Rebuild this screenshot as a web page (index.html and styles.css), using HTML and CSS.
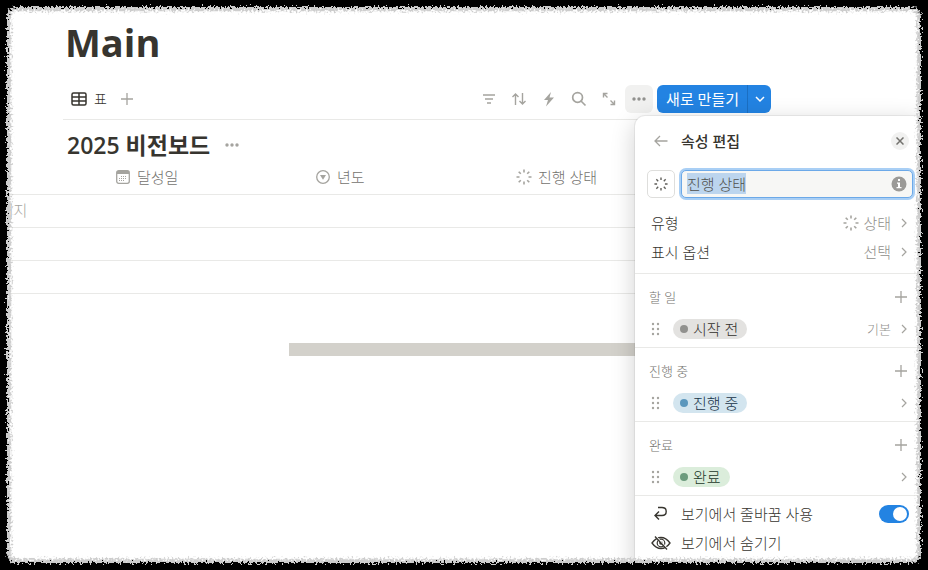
FILE: index.html
```html
<!DOCTYPE html>
<html lang="ko">
<head>
    <meta charset="UTF-8">
    <meta name="viewport" content="width=device-width, initial-scale=1.0">
    <title>Main</title>
    <link rel="stylesheet" href="styles.css">
</head>
<body>
    <svg class="defs" aria-hidden="true">
        <symbol id="spinner" viewBox="0 0 16 16">
            <path d="M8 .5v3M8 12.500v3M.5 8h3M12.500 8h3M2.700 2.700l2.100 2.100M11.200 11.200l2.100 2.100M2.700 13.300l2.100-2.100M11.200 4.800l2.100-2.100" fill="none" stroke="currentColor" stroke-width="1.600"/>
        </symbol>
        <symbol id="chevron" viewBox="0 0 8 12">
            <path d="M2 2l4 4-4 4" fill="none" stroke="currentColor" stroke-width="1.200"/>
        </symbol>
        <symbol id="plus" viewBox="0 0 14 14">
            <path d="M7 1v12M1 7h12" fill="none" stroke="currentColor" stroke-width="1.300"/>
        </symbol>
        <symbol id="dots" viewBox="0 0 16 16">
            <g fill="currentColor"><circle cx="3" cy="8" r="1.700"/><circle cx="8" cy="8" r="1.700"/><circle cx="13" cy="8" r="1.700"/></g>
        </symbol>
        <symbol id="grip" viewBox="0 0 10 14">
            <g fill="currentColor"><circle cx="2" cy="2" r="1.200"/><circle cx="7" cy="2" r="1.200"/><circle cx="2" cy="7" r="1.200"/><circle cx="7" cy="7" r="1.200"/><circle cx="2" cy="12" r="1.200"/><circle cx="7" cy="12" r="1.200"/></g>
        </symbol>
        <filter id="rough" x="0" y="0" width="100%" height="100%" color-interpolation-filters="sRGB">
            <feTurbulence type="fractalNoise" baseFrequency="0.5" numOctaves="3" seed="4" result="noise"/>
            <feDisplacementMap in="SourceGraphic" in2="noise" scale="10" xChannelSelector="R" yChannelSelector="G"/>
            <feGaussianBlur stdDeviation="0.4"/>
        </filter>
    </svg>

    <div class="page">
        <main>
            <div class="content">
                <h1>Main</h1>
                <div class="toolbar">
                    <button class="view-tab">
                        <svg width="16" height="14" viewBox="0 0 16 14"><path d="M2.500 1h11Q15 1 15 2.500v9q0 1.500-1.500 1.500h-11Q1 13 1 11.500v-9Q1 1 2.500 1zM1 5h14M1 9h14M8 1v12" fill="none" stroke="currentColor" stroke-width="1.500"/></svg>
                        표
                    </button>
                    <button class="icon-btn" aria-label="보기 추가"><svg width="14" height="14"><use href="#plus"/></svg></button>
                    <div class="tools">
                        <button class="icon-btn" aria-label="필터"><svg width="14" height="14" viewBox="0 0 14 14"><path d="M1 3h12M3 7h8M5 11h4" fill="none" stroke="currentColor" stroke-width="1.500"/></svg></button>
                        <button class="icon-btn" aria-label="정렬"><svg width="16" height="14" viewBox="0 0 16 14"><path d="M4.500 13V2M1.500 5l3-3 3 3M11.500 1v11M8.500 9l3 3 3-3" fill="none" stroke="currentColor" stroke-width="1.400"/></svg></button>
                        <button class="icon-btn" aria-label="자동화"><svg width="14" height="16" viewBox="0 0 14 16"><path d="M9 1L2 9h4l-2 6.500L12 6.500H7.500z" fill="currentColor"/></svg></button>
                        <button class="icon-btn" aria-label="검색"><svg width="16" height="16" viewBox="0 0 16 16"><path d="M10.500 10.500l4 4M11.500 6.500a4.900 4.900 0 1 1-9.800 0 4.900 4.900 0 0 1 9.800 0z" fill="none" stroke="currentColor" stroke-width="1.700"/></svg></button>
                        <button class="icon-btn" aria-label="펼치기"><svg width="14" height="14" viewBox="0 0 14 14"><path d="M1.500 5.500v-4h4M2 2l3.500 3.500M12.500 8.500v4h-4M12 12L8.500 8.500" fill="none" stroke="currentColor" stroke-width="1.400"/></svg></button>
                        <button class="icon-btn active" aria-label="더 보기"><svg width="16" height="16"><use href="#dots"/></svg></button>
                    </div>
                    <div class="new-group">
                        <button class="new-btn">새로 만들기</button>
                        <button class="new-more" aria-label="템플릿"><svg width="10" height="8" viewBox="0 0 10 8"><path d="M1 2l4 4 4-4" fill="none" stroke="currentColor" stroke-width="1.500"/></svg></button>
                    </div>
                </div>
                <div class="db-title">
                    <h2>2025 비전보드</h2>
                    <button class="plain" aria-label="데이터베이스 메뉴"><svg width="16" height="16"><use href="#dots"/></svg></button>
                </div>
            </div>

            <div class="table-wrap">
                <table>
                    <thead>
                        <tr>
                            <th class="col-name"></th>
                            <th>
                                <span class="prop">
                                    <svg width="14" height="14" viewBox="0 0 14 14"><rect x=".7" y=".7" width="12.600" height="12.600" rx="2" fill="none" stroke="currentColor" stroke-width="1.300"/><path d="M1 1h12v3H1z" fill="currentColor"/><path d="M5 6.500h6M3 8.500h8M3 10.500h6" stroke="currentColor" stroke-dasharray="1 1"/></svg>
                                    달성일
                                </span>
                            </th>
                            <th>
                                <span class="prop">
                                    <svg width="14" height="14" viewBox="0 0 14 14"><circle cx="7" cy="7" r="6.300" fill="none" stroke="currentColor" stroke-width="1.300"/><path d="M4 5h6L7 9.800z" fill="currentColor"/></svg>
                                    년도
                                </span>
                            </th>
                            <th>
                                <span class="prop status">
                                    <svg width="16" height="16"><use href="#spinner"/></svg>
                                    진행 상태
                                </span>
                            </th>
                            <th class="col-rest"></th>
                        </tr>
                    </thead>
                    <tbody>
                        <tr><td>페이지</td><td></td><td></td><td></td><td></td></tr>
                        <tr><td></td><td></td><td></td><td></td><td></td></tr>
                        <tr><td></td><td></td><td></td><td></td><td></td></tr>
                    </tbody>
                </table>
            </div>
            <div class="scroll-thumb"></div>
        </main>

        <aside class="panel">
            <header class="panel-head">
                <button class="plain" aria-label="뒤로"><svg width="14" height="12" viewBox="0 0 14 12"><path d="M13.500 6H1M6 1L1 6l5 5" fill="none" stroke="currentColor" stroke-width="1.300"/></svg></button>
                <h3>속성 편집</h3>
                <button class="close" aria-label="닫기"><svg width="8" height="8" viewBox="0 0 8 8"><path d="M.5 .5l7 7M7.500 .5l-7 7" fill="none" stroke="currentColor" stroke-width="1.500"/></svg></button>
            </header>

            <div class="name-row">
                <button class="icon-box" aria-label="아이콘"><svg width="14" height="14"><use href="#spinner"/></svg></button>
                <div class="name-field">
                    <input type="text" id="propName" aria-label="속성 이름" value="진행 상태">
                    <svg class="info" width="16" height="16" viewBox="0 0 16 16"><circle cx="8" cy="8" r="7.500" fill="#9b9a97"/><path d="M7 3h2v2H7zM6 6.500h3V11h1.500v1.300h-5V11H7V7.800H6z" fill="#fff"/></svg>
                </div>
            </div>

            <button class="row">
                <span>유형</span>
                <span class="value"><svg width="16" height="16"><use href="#spinner"/></svg>상태</span>
                <svg class="chev" width="8" height="12"><use href="#chevron"/></svg>
            </button>
            <button class="row">
                <span>표시 옵션</span>
                <span class="value">선택</span>
                <svg class="chev" width="8" height="12"><use href="#chevron"/></svg>
            </button>

            <section class="group first">
                <div class="group-head">
                    <h4>할 일</h4>
                    <button class="plain" aria-label="할 일 추가"><svg width="14" height="14"><use href="#plus"/></svg></button>
                </div>
                <button class="option">
                    <svg class="grip" width="10" height="14"><use href="#grip"/></svg>
                    <span class="pill gray">시작 전</span>
                    <span class="value small">기본</span>
                    <svg class="chev" width="8" height="12"><use href="#chevron"/></svg>
                </button>
            </section>
            <section class="group">
                <div class="group-head">
                    <h4>진행 중</h4>
                    <button class="plain" aria-label="진행 중 추가"><svg width="14" height="14"><use href="#plus"/></svg></button>
                </div>
                <button class="option">
                    <svg class="grip" width="10" height="14"><use href="#grip"/></svg>
                    <span class="pill blue">진행 중</span>
                    <span class="value"></span>
                    <svg class="chev" width="8" height="12"><use href="#chevron"/></svg>
                </button>
            </section>
            <section class="group">
                <div class="group-head">
                    <h4>완료</h4>
                    <button class="plain" aria-label="완료 추가"><svg width="14" height="14"><use href="#plus"/></svg></button>
                </div>
                <button class="option">
                    <svg class="grip" width="10" height="14"><use href="#grip"/></svg>
                    <span class="pill green">완료</span>
                    <span class="value"></span>
                    <svg class="chev" width="8" height="12"><use href="#chevron"/></svg>
                </button>
            </section>

            <div class="actions">
                <label class="action">
                    <svg width="20" height="16" viewBox="0 0 20 16"><path d="M7 1.500h4q4.200 0 4.200 4T11 9.500H4M8 5.500l-4 4 4 4" fill="none" stroke="currentColor" stroke-width="1.400"/></svg>
                    보기에서 줄바꿈 사용
                    <input type="checkbox" class="toggle" checked>
                </label>
                <button class="action">
                    <svg width="20" height="16" viewBox="0 0 20 16"><path d="M1 8q4-5.500 9-5.500T19 8q-4 5.500-9 5.500T1 8z" fill="none" stroke="currentColor" stroke-width="1.300"/><circle cx="10" cy="8" r="3.800" fill="none" stroke="currentColor" stroke-width="1.200"/><circle cx="10" cy="8" r="1.800" fill="currentColor"/><path d="M5 1.500l12 13" stroke="#fff" stroke-width="1.500"/><path d="M4 1.500l12 13" stroke="currentColor" stroke-width="1.300"/></svg>
                    보기에서 숨기기
                </button>
            </div>
        </aside>
        <div class="edge"></div>
    </div>

    <script>
        // Start with the property name selected, ready to be typed over
        const propName = document.getElementById('propName');
        propName.focus();
        propName.select();
    </script>
</body>
</html>
```
FILE: styles.css
```css
* {
    box-sizing: border-box;
}

body {
    margin: 0;
    background-color: #fff;
    color: #37352f;
    font-family: "Open Sans", "Noto Sans CJK KR", sans-serif;
    font-size: 15px;
    font-weight: 300;
    line-height: 20px;
}

h1, h2, h3, h4 {
    margin: 0;
}

button {
    display: flex;
    align-items: center;
    border: none;
    padding: 0;
    background: none;
    color: inherit;
    font: inherit;
    text-align: left;
    cursor: pointer;
}

svg {
    display: block;
    flex-shrink: 0;
}

.defs {
    position: absolute;
    width: 0;
    height: 0;
}

.page {
    position: relative;
    height: 100vh;
    overflow: hidden;
}

/* torn black edge round the page */
.edge {
    position: absolute;
    inset: -20px;
    border: 27px solid #000;
    border-radius: 36px;
    box-shadow: inset 0 0 2px 4px #ccc;
    outline: 20px solid #000;
    filter: url(#rough);
    pointer-events: none;
}

.content {
    padding: 14px 157px 0 63px;
}

h1 {
    padding-left: 2px;
    font-size: 38px;
    font-weight: 700;
    line-height: 56px;
}

.toolbar {
    display: flex;
    align-items: center;
    margin-top: 15px;
    padding-bottom: 6px;
    border-bottom: 1px solid #e9e9e7;
}

.view-tab {
    gap: 7px;
    padding: 0 6px 0 8px;
    font-size: 14px;
}

.icon-btn {
    justify-content: center;
    width: 28px;
    height: 28px;
    border-radius: 6px;
    color: #a5a49f;
}

.icon-btn.active {
    background-color: #f1f1f0;
    color: #91918e;
}

.tools {
    display: flex;
    gap: 2px;
    margin-left: auto;
    margin-right: 4px;
}

.new-group {
    display: flex;
    height: 28px;
    border-radius: 6px;
    background-color: #2383e2;
    color: #fff;
}

.new-btn {
    padding: 0 8px 0 9px;
    font-weight: 400;
}

.new-more {
    justify-content: center;
    width: 24px;
    border-left: 1px solid #1b6fc3;
}

.db-title {
    display: flex;
    align-items: center;
    gap: 14px;
    height: 41px;
    padding: 8px 0 0 4px;
}

h2 {
    font-size: 23px;
    font-weight: 600;
    line-height: 34px;
}

.plain {
    color: #a5a49f;
}

.table-wrap {
    margin-left: -22px;
}

table {
    width: 100%;
    border-collapse: collapse;
    table-layout: fixed;
}

th, td {
    width: 200px;
    height: 33px;
    padding: 0 8px;
    border-bottom: 1px solid #e9e9e7;
    color: #a5a49f;
    font-weight: 300;
    text-align: left;
}

td {
    padding-bottom: 2px;
}

.col-name {
    width: 130px;
}

.col-rest {
    width: auto;
}

.prop {
    display: flex;
    align-items: center;
    gap: 7px;
    color: #73726e;
}

.prop.status {
    gap: 6px;
}

.prop svg {
    color: #a5a49f;
}

.scroll-thumb {
    height: 13px;
    margin: 49px 0 0 289px;
    background-color: #d3d1cb;
}

.panel {
    position: absolute;
    top: 116px;
    right: 3px;
    bottom: 0;
    width: 290px;
    border-radius: 10px 10px 0 0;
    background-color: #fff;
    box-shadow: 0 0 0 1px rgba(15, 15, 15, 0.06), 0 6px 24px rgba(15, 15, 15, 0.2);
}

.panel-head {
    display: flex;
    align-items: center;
    gap: 13px;
    height: 50px;
    padding: 0 16px 0 19px;
}

h3 {
    font-size: 15px;
    font-weight: 500;
}

.close {
    justify-content: center;
    width: 18px;
    height: 18px;
    margin-left: auto;
    border-radius: 50%;
    background-color: #f1f1f0;
    color: #73726e;
}

.name-row {
    display: flex;
    gap: 6px;
    padding: 4px 12px 10px;
}

.icon-box {
    justify-content: center;
    width: 28px;
    height: 28px;
    border: 1px solid #dededc;
    border-radius: 5px;
    color: #5f5e5a;
}

.name-field {
    position: relative;
    flex: 1;
}

.name-field input {
    display: block;
    width: 100%;
    height: 28px;
    padding: 0 28px 2px 5px;
    border: 1px solid #6ca9e8;
    border-radius: 5px;
    outline: none;
    background-color: #f7f7f5;
    box-shadow: 0 0 0 2px #a9cff5;
    color: inherit;
    font: inherit;
}

.name-field input::selection {
    background-color: #bcd5ee;
    color: #50504c;
}

.info {
    position: absolute;
    top: 6px;
    right: 6px;
}

.row {
    width: 100%;
    height: 29px;
    padding: 0 17px 0 16px;
}

.value {
    display: flex;
    align-items: center;
    gap: 4px;
    margin-left: auto;
    color: #91908c;
}

.value svg {
    color: #a5a49f;
}

.value.small {
    font-size: 13px;
}

.chev {
    margin-left: 9px;
    color: #a5a49f;
}

.group {
    padding: 9px 0 4px;
    border-bottom: 1px solid #e9e9e7;
}

.group.first {
    margin-top: 7px;
    border-top: 1px solid #e9e9e7;
}

.group-head {
    display: flex;
    align-items: center;
    justify-content: space-between;
    height: 28px;
    padding: 0 17px 0 14px;
}

h4 {
    color: #73726e;
    font-size: 13px;
    font-weight: 300;
}

.option {
    width: 100%;
    height: 28px;
    margin-top: 4px;
    padding: 0 17px 0 16px;
}

.grip {
    margin-right: 12px;
    color: #a5a49f;
}

.pill {
    display: flex;
    align-items: center;
    gap: 5px;
    height: 20px;
    padding: 0 9px 0 7px;
    border-radius: 10px;
}

.pill::before {
    content: "";
    width: 8px;
    height: 8px;
    border-radius: 50%;
}

.gray {
    background-color: #e3e2e0;
    color: #32302c;
}

.gray::before {
    background-color: #91918e;
}

.blue {
    background-color: #d3e5ef;
    color: #183347;
}

.blue::before {
    background-color: #5b97bd;
}

.green {
    background-color: #dbeddb;
    color: #1c3829;
}

.green::before {
    background-color: #6c9b7d;
}

.actions {
    padding-top: 3px;
}

.action {
    display: flex;
    align-items: center;
    gap: 10px;
    width: 100%;
    height: 29px;
    padding: 0 16px;
}

.toggle {
    appearance: none;
    width: 30px;
    height: 18px;
    margin: 0 0 0 auto;
    border-radius: 9px;
    background-color: #c8c7c4;
}

.toggle::before {
    content: "";
    display: block;
    width: 14px;
    height: 14px;
    margin: 2px;
    border-radius: 50%;
    background-color: #fff;
}

.toggle:checked {
    background-color: #2383e2;
}

.toggle:checked::before {
    margin-left: 14px;
}
```
